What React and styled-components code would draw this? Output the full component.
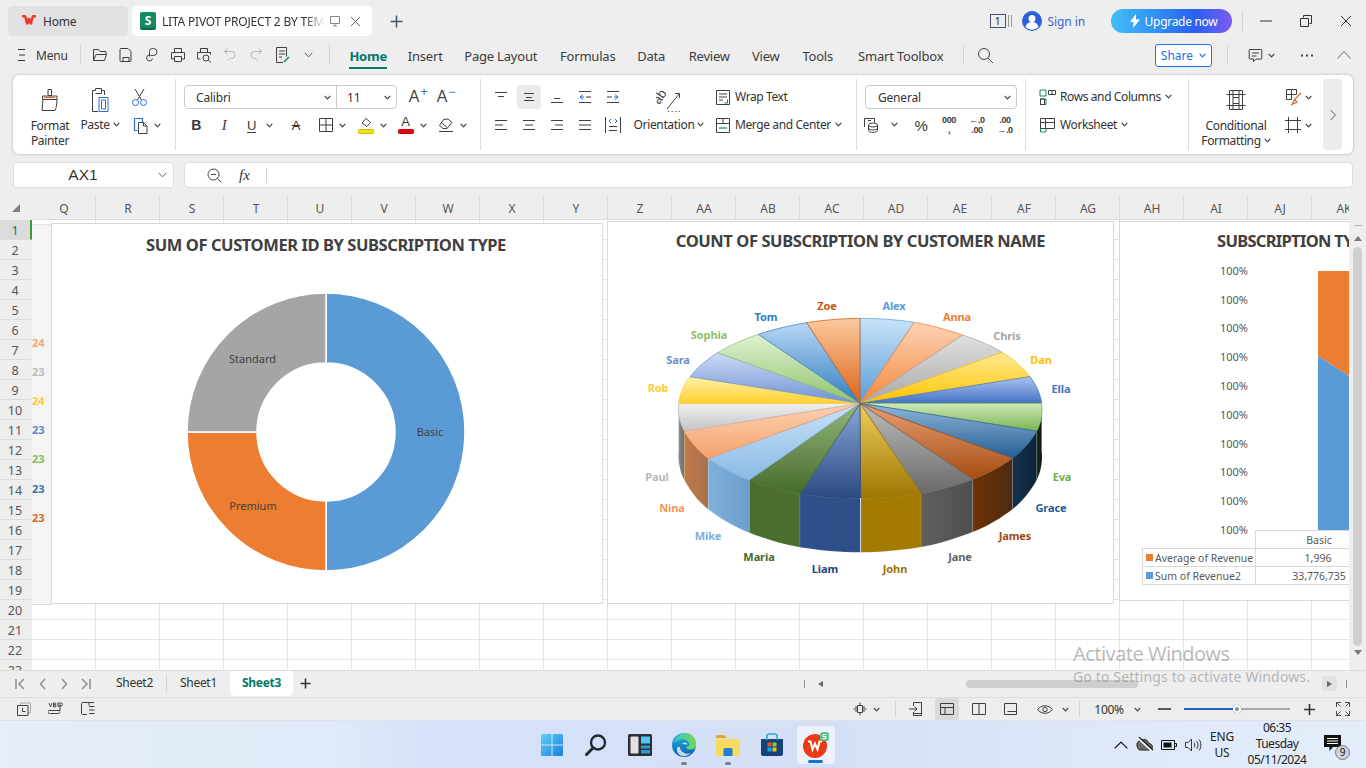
import React from "react";
import styled, { createGlobalStyle } from "styled-components";

const Global = createGlobalStyle`
  html, body { margin: 0; padding: 0; background: #eeeeee; }
  * { box-sizing: border-box; }
  #root { width: 1366px; height: 768px; overflow: hidden; }
`;

const UI = `"Noto Sans", "Open Sans", sans-serif`;

const Page = styled.div`
  position: relative; width: 1366px; height: 768px; overflow: hidden;
  display: flex; flex-direction: column; background: #eeeeee;
  font-family: ${UI}; font-size: 12px; color: #3a3a3a;
`;
const Glyph = styled.svg`
  display: block; flex: none; fill: none; stroke: #3f3f3f; stroke-width: 1;
`;
const Ico = ({ w = 16, h = 16, children }) => (
  <Glyph width={w} height={h} viewBox={`0 0 ${w} ${h}`}>{children}</Glyph>
);
const Caret = ({ c = "#444" }) => (
  <Glyph width="7" height="5" viewBox="0 0 7 5" style={{ stroke: c, strokeWidth: 1.2 }}><path d="M.7 .8l2.8 3 2.8-3" /></Glyph>
);

/* ---------- title bar ---------- */
const TitleBar = styled.div`height: 40px; padding: 6px 0 4px 8px; display: flex; align-items: center;`;
const TabChip = styled.div`
  height: 30px; width: ${p => p.$w}px; margin-right: 4px; border-radius: 5px;
  display: flex; align-items: center; background: ${p => (p.$active ? "#fff" : "#e1e1e1")};
  padding-left: ${p => p.$pad}px; color: #333; font-size: 12px; white-space: nowrap;
`;
const TabName = styled.span`
  width: ${p => p.$w}px; margin: 0 ${p => p.$mr || 0}px 0 ${p => p.$ml}px; overflow: hidden; letter-spacing: -.2px; flex: none;
  ${p => p.$fade && "-webkit-mask-image: linear-gradient(90deg,#000 88%,transparent); mask-image: linear-gradient(90deg,#000 88%,transparent);"}
`;
const SheetBadge = styled.span`
  width: 16px; height: 18px; border-radius: 2px; background: #138a63; color: #fff; flex: none;
  font-weight: 700; font-size: 12px; line-height: 17px; text-align: center; border-bottom: 2px solid #0c6b4c;
`;
const Spring = styled.div`flex: 1;`;
const TitleRight = styled.div`display: flex; align-items: center; height: 30px; margin-left: 1px;`;
const PageBox = styled.span`
  width: 16px; height: 14px; border: 1px solid #4b5568; color: #333; font-size: 11px; line-height: 12px; text-align: center; flex: none;
`;
const SignIn = styled.span`color: #3566d6; font-size: 12px; margin: 0 26px 0 6px; letter-spacing: -.1px;`;
const Upgrade = styled.div`
  width: 121px; height: 24px; border-radius: 12px; display: flex; align-items: center; justify-content: center; gap: 5px; padding-left: 4px;
  background: linear-gradient(90deg,#43bdf7 0%,#2f8cf5 40%,#2a5ff0 70%,#7b5cf2 100%); color: #fff; font-size: 12px; letter-spacing: -.3px;
`;
const VRule = styled.div`width: 1px; height: ${p => p.$h || 20}px; background: #d2d2d2; flex: none; margin: ${p => p.$m || "0"};`;
const WinBtn = styled.div`width: 40px; display: flex; justify-content: center; flex: none;`;

/* ---------- menu row ---------- */
const MenuRow = styled.div`height: 30px; display: flex; align-items: center; padding-left: 18px;`;
const MenuLabel = styled.span`font-size: 12px; margin: 0 12px 0 10px; width: 33px; letter-spacing: -.2px;`;
const QuickSlot = styled.div`width: 26px; display: flex; justify-content: center; flex: none;`;
const TabStrip = styled.div`display: flex; height: 30px; margin-left: 8px;`;
const MenuTab = styled.div`
  width: ${p => p.$w}px; flex: none; display: flex; justify-content: center; align-items: flex-start; padding-top: 6px;
  font-size: 13px; letter-spacing: -.2px; color: #3c3c3c;
`;
const MenuTabText = styled.span`
  height: 23px; line-height: 20px;
  ${p => p.$active && "font-weight: 700; color: #00786c; border-bottom: 2px solid #00786c;"}
`;
const ShareBtn = styled.div`
  width: 57px; height: 23px; border: 1px solid #1a73e8; border-radius: 3px; background: #fff; color: #1a6fe0; flex: none;
  display: flex; align-items: center; justify-content: center; gap: 6px; font-size: 12px; margin: 0 15px 0 161px;
`;
const RightSlot = styled.div`
  width: ${p => p.$w}px; flex: none; display: flex; align-items: center; justify-content: center; gap: 5px; margin-left: ${p => p.$ml || 0}px;
`;

/* ---------- ribbon ---------- */
const Ribbon = styled.div`
  margin: 5px 0 0 13px; width: 1340px; height: 79px; background: #fff; border-radius: 6px;
  box-shadow: 0 0 3px rgba(0,0,0,.28); display: flex; align-items: stretch; padding: 4px 0;
`;
const Group = styled.div`
  width: ${p => p.$w}px; flex: none; padding: 6px 0 0 ${p => p.$pl || 0}px; display: flex; align-items: flex-start;
  border-right: ${p => (p.$last ? "none" : "1px solid #dcdcdc")};
`;
const Big = styled.div`
  width: ${p => p.$w}px; margin-left: ${p => p.$ml || 0}px; flex: none; display: flex; flex-direction: column; align-items: center;
  font-size: 12px; line-height: 15px; color: #333; letter-spacing: -.35px;
`;
const BigIcon = styled.div`height: 29px; display: flex; align-items: center; margin-bottom: ${p => p.$mb || 0}px;`;
const LabelLine = styled.div`display: flex; align-items: center; gap: 3px; white-space: nowrap;`;
const Col = styled.div`display: flex; flex-direction: column; gap: 4px; margin-left: ${p => p.$ml || 0}px; flex: none;`;
const Row = styled.div`display: flex; align-items: center; height: 24px;`;
const Tool = styled.div`
  width: ${p => p.$w || 24}px; height: 24px; margin-left: ${p => p.$ml || 0}px; flex: none; display: flex; align-items: center;
  justify-content: ${p => p.$start ? "flex-start" : "center"}; gap: ${p => p.$gap ?? 6}px; border-radius: 3px; color: #333;
  font-size: 12px; letter-spacing: -.4px; white-space: nowrap; background: ${p => (p.$on ? "#ebebeb" : "transparent")};
  ${p => p.$start && "padding-bottom: 1px;"}
`;
const SelectBox = styled.div`
  display: flex; height: 24px; width: ${p => p.$w}px; border: 1px solid #c9c9c9; border-radius: 4px; background: #fff; flex: none;
`;
const SelectPart = styled.div`
  width: ${p => p.$w}px; flex: ${p => (p.$w ? "none" : 1)}; display: flex; align-items: center; justify-content: space-between;
  padding: 0 5px 0 ${p => p.$pl}px; font-size: 12px; color: #333; letter-spacing: -.2px;
  ${p => p.$split && "border-right: 1px solid #c9c9c9;"}
`;
const LetterA = styled.span`
  font-size: 16px; font-family: "Liberation Sans", sans-serif; font-weight: 300; color: #444; line-height: 1; position: relative; padding-right: 6px;
`;
const Sup = styled.span`
  position: absolute; top: -3px; right: -2px; font-size: 12px; color: ${p => p.$c}; line-height: 1;
`;
const Bold = styled.span`font: 700 14px "Liberation Sans", sans-serif; color: #3a3a3a;`;
const Ital = styled.span`font: italic 15px "Liberation Serif", serif; color: #3a3a3a;`;
const Under = styled.span`font: 13px "Liberation Sans", sans-serif; text-decoration: underline; text-underline-offset: 2px; color: #3a3a3a;`;
const Strike = styled.span`font: 13px "Liberation Sans", sans-serif; text-decoration: line-through; color: #3a3a3a;`;
const ColorA = styled.span`
  display: flex; flex-direction: column; align-items: center; width: 16px; font: 13px/12px "Liberation Sans", sans-serif; color: #3a3a3a;
`;
const ColorBar = styled.span`display: block; width: 16px; height: 5px; margin-top: 1px; border-radius: 1.5px; background: ${p => p.$c}; border: 1px solid ${p => p.$b};`;
const TinyStack = styled.span`
  display: flex; flex-direction: column; align-items: center; font: 700 9px/10px "Liberation Sans", sans-serif; color: #3a3a3a;
`;
const Percent = styled.span`font: 15px "Liberation Sans", sans-serif; color: #3a3a3a;`;
const ScrollBtn = styled.div`
  width: 19px; margin-left: 0; border-radius: 3px; background: #ececec; display: flex; align-items: center; justify-content: center; flex: none;
`;

/* ---------- formula bar ---------- */
const FormulaRow = styled.div`display: flex; height: 26px; margin: 8px 0 0 13px; gap: 10px;`;
const NameBox = styled.div`
  width: 161px; background: #fff; border: 1px solid #dedede; border-radius: 4px; display: flex; align-items: center; padding: 0 6px 0 0; flex: none;
`;
const NameText = styled.span`flex: 1; text-align: center; font-size: 15.5px; font-weight: 300; font-family: "Liberation Sans", sans-serif; color: #333; padding-right: 6px;`;
const FormulaBox = styled.div`
  width: 1169px; background: #fff; border: 1px solid #dedede; border-radius: 4px; display: flex; align-items: center; padding-left: 22px; flex: none;
`;
const Fx = styled.span`font: italic 15px "Liberation Serif", serif; color: #333; margin: 0 10px 0 17px; width: 17px;`;

/* ---------- headers ---------- */
const ColHead = styled.div`display: flex; width: 1349px; overflow: hidden; height: 24px; margin-top: 8px;`;
const Corner = styled.div`width: 32px; display: flex; align-items: center; justify-content: center; flex: none;`;
const ColCell = styled.div`
  width: 64px; flex: none; height: 24px; border-right: 1px solid #dcdcdc; border-bottom: 1px solid #dcdcdc; text-align: center;
  font-size: 12px; line-height: 25px; color: #555; padding-left: 1px;
`;
const Sheet = styled.div`display: flex; height: 450px;`;
const RowHead = styled.div`width: 32px; flex: none; overflow: hidden; background: #eeeeee;`;
const RowCell = styled.div`
  height: 20px; text-align: center; font-size: 12.5px; line-height: 21px; color: ${p => (p.$on ? "#00786c" : "#555")};
  border-bottom: 1px solid #dcdcdc; background: ${p => (p.$on ? "#dcdcdc" : "transparent")};
  border-right: 2px solid ${p => (p.$on ? "#3f9a2f" : "transparent")};
`;
const Grid = styled.div`
  position: relative; width: 1317px; flex: none; overflow: hidden; background-color: #fff;
  background-image:
    repeating-linear-gradient(90deg, transparent 0 63px, #e3e3e3 63px 64px),
    repeating-linear-gradient(180deg, transparent 0 19px, #e3e3e3 19px 20px);
`;
const Strip = styled.div`
  position: absolute; left: 0; top: 4px; width: 19px; height: 381px; background: #f4f4f4; border-top: 1px solid #e3e3e3; border-bottom: 1px solid #d9d9d9;
`;
const StripNum = styled.span`
  position: absolute; left: 0; top: ${p => p.$y - 224 - 9}px; font-weight: 700; font-size: 11px; line-height: 16px; color: ${p => p.$c};
`;
const Card = styled.div`
  position: absolute; left: ${p => p.$x}px; top: ${p => p.$y}px; width: ${p => p.$w}px; height: ${p => p.$h}px;
  background: #fff; border: 1px solid #d9d9d9; display: flex; flex-direction: column;
`;
const ChartTitle = styled.div`
  height: ${p => p.$h}px; line-height: ${p => p.$h}px; flex: none; white-space: nowrap; color: #404040; font-weight: 700;
  font-size: 16.5px; letter-spacing: ${p => p.$ls ?? -0.42}px; text-align: ${p => (p.$pl ? "left" : "center")};
  padding: 0 ${p => p.$pr || 0}px 0 ${p => p.$pl || 0}px;
`;
const VScroll = styled.div`
  width: 17px; flex: none; background: #eeeeee; display: flex; flex-direction: column; align-items: center; padding-top: 5px; 
`;
const VDash = styled.div`width: 8px; height: 1px; background: #b5b5b5; margin-bottom: 10px;`;
const VThumb = styled.div`width: 9px; height: 399px; border-radius: 5px; background: #cfcfcf; margin: 6px 0 4px;`;

/* ---------- sheet tabs ---------- */
const TabsBar = styled.div`
  height: 27px; border-top: 1px solid #dcdcdc; display: flex; align-items: flex-start; background: #eeeeee; position: relative;
`;
const NavSlot = styled.div`width: 22px; height: 25px; display: flex; align-items: center; justify-content: center; flex: none;`;
const NavWrap = styled.div`display: flex; padding-left: 9px; width: 103px; flex: none;`;
const SheetTab = styled.div`
  width: ${p => p.$w}px; height: 25px; flex: none; text-align: center; line-height: 24px; font-size: 12px; color: #333; letter-spacing: -.3px;
  ${p => p.$on && "background:#fff; color:#00786c; font-weight:700; border-radius: 0 0 5px 5px;"}
`;
const TabSep = styled.div`width: 1px; height: 17px; margin-top: 4px; background: #cfcfcf; flex: none;`;
const HScrollWrap = styled.div`display: flex; align-items: center; height: 25px; margin-left: 0; flex: none;`;
const HThumb = styled.div`width: 172px; height: 8px; border-radius: 4px; background: #cfcfcf; margin-left: 143px;`;
const HBtn = styled.div`
  width: 15px; height: 15px; margin-left: 184px; border-radius: 3px; background: #e2e2e2; display: flex; align-items: center; justify-content: center;
`;
const Tick = styled.div`width: 1px; height: 8px; background: #8f8f8f; margin-left: ${p => p.$ml || 0}px;`;
const Tri = styled.div`
  width: 0; height: 0; margin-left: ${p => p.$ml || 0}px; border-style: solid;
  border-width: ${p => (p.$up || p.$down ? "0 4px" : "3.5px 0")};
  ${p => p.$left && "border-width: 3.5px 5px 3.5px 0; border-color: transparent #666 transparent transparent;"}
  ${p => p.$right && "border-width: 3.5px 0 3.5px 5px; border-color: transparent transparent transparent #666;"}
  ${p => p.$up && "border-width: 0 4px 5px 4px; border-color: transparent transparent #7a7a7a transparent;"}
  ${p => p.$down && "border-width: 5px 4px 0 4px; border-color: #7a7a7a transparent transparent transparent;"}
`;

/* ---------- status ---------- */
const StatusBar = styled.div`height: 23px; border-top: 1px solid #dcdcdc; display: flex; align-items: center; background: #ededed; padding-left: 8px;`;
const StatSlot = styled.div`
  width: ${p => p.$w || 32}px; height: 22px; flex: none; display: flex; align-items: center; justify-content: center; gap: ${p => p.$gap ?? 5}px;
  border-radius: 3px; font-size: 12px; color: #333; letter-spacing: -.3px; margin-left: ${p => p.$ml || 0}px;
  background: ${p => (p.$on ? "#d9d9d9" : "transparent")};
`;
const Slider = styled.div`position: relative; width: 106px; height: 2px; background: #a8a8a8; flex: none; margin-left: 6px;`;
const SliderFill = styled.div`position: absolute; left: 0; top: 0; height: 2px; width: 50%; background: #1f63c4;`;
const SliderKnob = styled.div`
  position: absolute; left: 49px; top: -3px; width: 8px; height: 8px; border-radius: 50%; background: #8d8d8d; border: 2px solid #fff; box-shadow: 0 0 1px #777;
`;

/* ---------- taskbar ---------- */
const Taskbar = styled.div`
  height: 48px; display: flex; align-items: center; padding-left: 530px;
  border-top: 1px solid #dbe3ef;
  background: linear-gradient(90deg,#e5eef9 0%,#e0eaf8 24%,#d4e1f8 32%,#d5e0f7 62%,#dde7f8 78%,#e4eefa 100%);
`;
const TaskSlot = styled.div`
  position: relative; width: 44px; height: 38px; flex: none; display: flex; align-items: center; justify-content: center;
  ${p => p.$on && "background:#edf1fb; border-radius: 4px; width: 38px; margin: 0 3px;"}
`;
const Dot = styled.div`
  position: absolute; left: 50%; bottom: -1px; transform: translateX(-50%); width: 6px; height: 3px; border-radius: 2px; background: #7c7f86;
`;
const Active = styled.div`
  position: absolute; left: 11px; bottom: 1px; width: 15px; height: 3px; border-radius: 2px; background: #0f72d8;
`;
const Tray = styled.div`display: flex; align-items: center; margin-left: 271px; height: 48px;`;
const TraySlot = styled.div`width: 24px; display: flex; justify-content: center; flex: none;`;
const Lang = styled.div`
  width: 34px; margin-left: 0; text-align: center; font-size: 12px; line-height: 16px; color: #222; flex: none; letter-spacing: -.2px;
`;
const Clock = styled.div`
  width: 76px; margin: -2px 0 0 0; text-align: center; font-size: 12px; line-height: 16px; color: #222; flex: none; letter-spacing: -.5px;
`;
const Notify = styled.div`position: relative; width: 24px; height: 24px; margin-left: 7px; flex: none;`;
const NotifyCount = styled.div`
  position: absolute; right: -4px; bottom: -3px; width: 15px; height: 15px; border-radius: 50%; background: #ccd3de; border: 1px solid #777;
  font-size: 10px; line-height: 13px; text-align: center; color: #111;
`;

/* ---------- activation ---------- */
const Watermark = styled.div`position: absolute; left: 1073px; top: 641px; color: rgba(120,120,120,.5); pointer-events: none;`;
const WmHead = styled.div`font-size: 20px; line-height: 26px; letter-spacing: -.55px; white-space: nowrap;`;
const WmSub = styled.div`font-size: 14px; line-height: 20px; margin-top: 0; letter-spacing: .15px; white-space: nowrap;`;

/* ---------- chart data ---------- */
const ChartSvg = styled.svg`display: block; flex: none; font-family: ${UI};`;

const donut = () => {
  const c = [326, 432], R = 139, r = 69;
  const pt = (a, rad) => [c[0] + rad * Math.sin(a), c[1] - rad * Math.cos(a)];
  const seg = (a, b) => {
    const [p, q, s, t] = [pt(a, R), pt(b, R), pt(b, r), pt(a, r)];
    const large = b - a > Math.PI ? 1 : 0;
    return `M${p[0]} ${p[1]}A${R} ${R} 0 ${large} 1 ${q[0]} ${q[1]}L${s[0]} ${s[1]}A${r} ${r} 0 ${large} 0 ${t[0]} ${t[1]}Z`;
  };
  return [
    [seg(0, Math.PI), "#5b9bd5"],
    [seg(Math.PI, 1.5 * Math.PI), "#ed7d31"],
    [seg(1.5 * Math.PI, 2 * Math.PI), "#a5a5a5"],
  ];
};

const rim = [[660,85],[822,97],[968,135],[1087,187],[1170,260],[1205,340],[1190,423],[1117,505],[998,568],[843,610],[662,625],[480,611],[328,570],[205,505],[133,423],[116,340],[150,260],[233,188],[355,133],[500,98]]
  .map(([x, y]) => [x / 3 + 640, y / 3 + 290]);
const CX = 860, CY = 403.3;
const slices = [
  ["Alex", 894, 306, "#5b9bd5", "#c9e3fa", "#5b9bd5"],
  ["Anna", 957, 317, "#ed7d31", "#fdd2b4", "#f3893d"],
  ["Chris", 1007, 336, "#a5a5a5", "#e0e0e0", "#a9a9a9"],
  ["Dan", 1041, 360, "#ffc000", "#ffea94", "#ffc400"],
  ["Ella", 1061, 389, "#4472c4", "#adc3ee", "#4472c4"],
  ["Eva", 1062, 477, "#70ad47", "#cfe8bb", "#7ab54f"],
  ["Grace", 1051, 508, "#255e91", "#90b7dc", "#255e91"],
  ["James", 1015, 536, "#9e480e", "#ea9f74", "#a54d12"],
  ["Jane", 960, 557, "#636363", "#bdbdbd", "#6a6a6a"],
  ["John", 895, 569, "#997300", "#f0cf5c", "#9c7600"],
  ["Liam", 825, 569, "#264478", "#8aa6da", "#2a4a80"],
  ["Maria", 759, 557, "#43682b", "#95b67b", "#466c2d"],
  ["Mike", 708, 536, "#7cafdd", "#c9e3fa", "#8abae4"],
  ["Nina", 672, 508, "#f1975a", "#fdd2b4", "#f5a26b"],
  ["Paul", 657, 477, "#b7b7b7", "#f0f0f0", "#c4c4c4"],
  ["Rob", 658, 388, "#ffcd33", "#fff1a8", "#ffd02e"],
  ["Sara", 678, 360, "#698ed0", "#cdd9f6", "#6f93d3"],
  ["Sophia", 709, 335, "#8cc168", "#e0f1d3", "#8fc46b"],
  ["Tom", 766, 317, "#327dc2", "#b8d7f4", "#327dc2"],
  ["Zoe", 827, 306, "#c55a11", "#fdca9f", "#dc6316"],
];
const walls = {
  5: ["#0f160a", "#1d2c12"], 6: ["#0d2236", "#133350"], 7: ["#4f2a10", "#6d3208"], 8: ["#4f4f4f", "#5f5f5f"],
  9: ["#a37b00", "#a37b00"], 10: ["#2e4f88", "#2f518b"], 11: ["#4a6e2d", "#4a6e2d"], 12: ["#6d9ecb", "#7eb0de"],
  13: ["#a8714d", "#c07a49"], 14: ["#6a6a6a", "#8e8e8e"],
};
const N = rim.length;
const at = i => rim[(i + N) % N];
const curve = i => {
  const [a, b, c, d] = [at(i - 1), at(i), at(i + 1), at(i + 2)];
  return [(c[0] - a[0]) / 6 + b[0], (c[1] - a[1]) / 6 + b[1], c[0] - (d[0] - b[0]) / 6, c[1] - (d[1] - b[1]) / 6, c[0], c[1]];
};
const slicePath = i => {
  const p = at(i), k = curve(i);
  return `M${CX} ${CY}L${p[0]} ${p[1]}C${k.join(" ")}Z`;
};
const depth = p => 47 + 7 * Math.max(0, (p[1] - CY) / 95);
const wallPath = i => {
  const p = at(i), q = at(i + 1), k = curve(i);
  const dp = depth(p), dq = depth(q);
  return `M${p[0]} ${p[1]}C${k.join(" ")}L${q[0]} ${q[1] + dq}C${k[2]} ${k[3] + dq} ${k[0]} ${k[1] + dp} ${p[0]} ${p[1] + dp}Z`;
};
const wallOrder = [5, 14, 6, 13, 7, 12, 8, 11, 9, 10];

const PieChart = () => (
  <ChartSvg width="505" height="343" viewBox="608 260 505 343">
    <defs>
      {slices.map((s, i) => (
        <linearGradient key={s[0]} id={`sl${i}`} x1="0" y1="0" x2="0" y2="1">
          <stop offset="0" stopColor={s[4]} />
          <stop offset="1" stopColor={s[5]} />
        </linearGradient>
      ))}
      {wallOrder.map(i => (
        <linearGradient key={i} id={`wl${i}`} x1="0" y1="0" x2="1" y2="0">
          <stop offset="0" stopColor={walls[i][1]} />
          <stop offset="1" stopColor={walls[i][0]} />
        </linearGradient>
      ))}
    </defs>
    {wallOrder.map(i => <path key={i} d={wallPath(i)} fill={`url(#wl${i})`} stroke="rgba(255,255,255,.18)" strokeWidth=".6" />)}
    {slices.map((s, i) => <path key={s[0]} d={slicePath(i)} fill={`url(#sl${i})`} stroke={s[3]} strokeWidth=".7" />)}
    <line x1="860.5" y1="498" x2="860.5" y2="552" stroke="#c9d3df" strokeWidth="1" />
    {slices.map(s => (
      <text key={s[0]} x={s[1]} y={s[2] + 4} textAnchor="middle" fontSize="11" fontWeight="700" fill={s[3]} letterSpacing="-.1">{s[0]}</text>
    ))}
  </ChartSvg>
);

const DonutChart = () => (
  <ChartSvg width="550" height="337" viewBox="52 266 550 337">
    {donut().map(([d, f]) => <path key={f} d={d} fill={f} stroke="#fff" strokeWidth="1.5" />)}
    <text x="252.5" y="363" textAnchor="middle" fontSize="11" fill="#404040">Standard</text>
    <text x="430" y="436" textAnchor="middle" fontSize="11" fill="#404040">Basic</text>
    <text x="253" y="510" textAnchor="middle" fontSize="11" fill="#404040">Premium</text>
  </ChartSvg>
);

const axisY = [271, 300, 328, 357, 386, 415, 444, 472, 501, 530];
const RevenueChart = () => (
  <ChartSvg width="505" height="342" viewBox="1120 260 505 342">
    {axisY.map((y, i) => <text key={i} x="1248" y={y + 4} textAnchor="end" fontSize="11" fill="#595959">100%</text>)}
    <polygon points="1318,271 1400,271 1400,409 1318,356" fill="#ed7d31" />
    <polygon points="1318,356 1400,409 1400,530 1318,530" fill="#5b9bd5" />
    <path d="M1255.5 530.5H1400M1142.5 548.5H1400M1142.5 566.5H1400M1142.5 584.5H1400M1255.5 530V585M1142.5 548V585" stroke="#d9d9d9" strokeWidth="1" />
    <text x="1319" y="544" textAnchor="middle" fontSize="10.5" fill="#595959">Basic</text>
    <rect x="1146" y="554" width="7" height="7" fill="#ed7d31" />
    <text x="1155" y="562" fontSize="10.5" fill="#595959">Average of Revenue</text>
    <text x="1318" y="562" textAnchor="middle" fontSize="10.5" fill="#595959">1,996</text>
    <rect x="1146" y="572" width="7" height="7" fill="#5b9bd5" />
    <text x="1155" y="580" fontSize="10.5" fill="#595959">Sum of Revenue2</text>
    <text x="1319" y="580" textAnchor="middle" fontSize="10.5" fill="#595959">33,776,735</text>
  </ChartSvg>
);

const columns = ["Q","R","S","T","U","V","W","X","Y","Z","AA","AB","AC","AD","AE","AF","AG","AH","AI","AJ","AK"];
const rowsN = Array.from({ length: 23 }, (_, i) => i + 1);
const stripNums = [["24", 343, "#f4a66e"], ["23", 372, "#bdbdbd"], ["24", 401, "#ffc933"], ["23", 430, "#5f86cc"], ["23", 459, "#86bd62"], ["23", 489, "#3a74a8"], ["23", 518, "#d0702c"]];

/* ---------- small icons ---------- */
const blue = { stroke: "#2c6bd0" };
const green = { stroke: "#0f8a5f" };
const grey = { stroke: "#b4b4b4" };

const AlignI = ({ d }) => <Ico><path d={d} /></Ico>;

export default function App() {
  return (
    <Page>
      <Global />
      <TitleBar>
        <TabChip $w={120} $pad={13}>
          <Glyph width="16" height="13" viewBox="0 0 16 13" style={{ stroke: "#e8392a", strokeWidth: 2.4 }}><path d="M1 1.2h3.2l2 8 1.8-6 1.8 6 2-8H15" strokeLinejoin="bevel" /></Glyph>
          <TabName $ml={6} $w={50}>Home</TabName>
        </TabChip>
        <TabChip $w={240} $active $pad={8}>
          <SheetBadge>S</SheetBadge>
          <TabName $ml={6} $mr={4} $w={163} $fade>LITA PIVOT PROJECT 2 BY TEMI</TabName>
          <Ico w={12} h={12}><path d="M1.5 1.5h9v7h-9zM4 11h4M6 8.500v2.500" stroke="#888" /></Ico>
          <span style={{ width: 9 }} />
          <Ico w={11} h={11}><path d="M1 1l9 9M10 1l-9 9" stroke="#666" /></Ico>
        </TabChip>
        <span style={{ width: 14 }} />
        <Ico w={13} h={13}><path d="M6.500 .5v12M.5 6.500h12" stroke="#46556b" strokeWidth="1.500" /></Ico>
        <Spring />
        <TitleRight>
          <PageBox>1</PageBox>
          <span style={{ width: 2 }} />
          <Ico w={5} h={14}><path d="M.5 1v12M3.500 1v12" stroke="#9a9a9a" /></Ico>
          <span style={{ width: 9 }} />
          <Glyph width="20" height="20" viewBox="0 0 20 20" style={{ stroke: "none" }}>
            <circle cx="10" cy="10" r="10" fill="#2c62d9" />
            <circle cx="10" cy="7.500" r="3.500" fill="#fff" />
            <path d="M3.500 16c1-4 4-5 6.500-5s5.500 1 6.500 5a9 9 0 0 1-13 0z" fill="#fff" />
          </Glyph>
          <SignIn>Sign in</SignIn>
          <Upgrade>
            <Glyph width="10" height="14" viewBox="0 0 10 14" style={{ stroke: "none" }}><path d="M6 0L0 8h3.500L3 14l7-8.500H6z" fill="#fff" /></Glyph>
            Upgrade now
          </Upgrade>
          <VRule $h={20} $m="0 3px 0 10px" />
          <WinBtn><Ico w={12} h={2}><path d="M0 1h12" stroke="#333" /></Ico></WinBtn>
          <WinBtn><Ico w={12} h={12}><path d="M3.500 2.500V.5h8v8h-2M.5 3.500h8v8h-8z" stroke="#333" /></Ico></WinBtn>
          <WinBtn><Ico w={12} h={12}><path d="M1 1l10 10M11 1L1 11" stroke="#333" /></Ico></WinBtn>
        </TitleRight>
      </TitleBar>

      <MenuRow>
        <Ico w={8} h={12}><path d="M0 .5h7M1 6h6M0 11.500h7" stroke="#333" /></Ico>
        <MenuLabel>Menu</MenuLabel>
        <VRule $h={20} $m="0 6px 0 0" />
        <QuickSlot><Ico><path d="M1.500 13.500v-11h5l1.500 2h6v3M1.500 13.500h11l2-6H4l-2.500 6" /></Ico></QuickSlot>
        <QuickSlot><Ico><path d="M3 1.500h7l3 3v9a1 1 0 0 1-1 1H3a1 1 0 0 1-1-1v-11a1 1 0 0 1 1-1zM5 14.500v-4h6v4" /></Ico></QuickSlot>
        <QuickSlot><Ico><path d="M5.500 9.500V4.500a3 3 0 0 1 3-3h1a3 3 0 0 1 0 7H6.500M5.500 8a3 3 0 1 0 3 3.500" /></Ico></QuickSlot>
        <QuickSlot><Ico><path d="M4.500 5V1.500h7V5M4.500 12H1.500V5.500h13V12h-3M4.500 9.500h7v5h-7z" /></Ico></QuickSlot>
        <QuickSlot><Ico><path d="M4.500 5V1.500h7V5M4.500 12H1.500V5.500h13v2" /><circle cx="10" cy="11" r="3" /><path d="M12.200 13.200l2.800 2.300" /></Ico></QuickSlot>
        <span style={{ width: 1 }} />
        <QuickSlot><Ico><path d="M5.500 1.500L2.500 4.500l3 3M2.500 4.500h7a3.500 3.500 0 0 1 0 7H8l-2 2" style={grey} /></Ico></QuickSlot>
        <QuickSlot><Ico><path d="M10.500 1.500l3 3-3 3M13.500 4.500h-7a3.500 3.500 0 0 0 0 7H8l2 2" style={grey} /></Ico></QuickSlot>
        <QuickSlot><Ico h={18}><path d="M9 16.500H2.500v-15h10v9M5 5h6M5 8h6M5 11h3" /><path d="M10 16l5-5" style={green} strokeWidth="1.500" /></Ico></QuickSlot>
        <QuickSlot><Ico w={9} h={6}><path d="M.7 .8l3.800 4 3.800-4" stroke="#555" /></Ico></QuickSlot>
        <VRule $h={20} $m="0 0 0 8px" />
        <TabStrip>
          {[["Home", 60, true], ["Insert", 54], ["Page Layout", 97], ["Formulas", 77], ["Data", 50], ["Review", 66], ["View", 47], ["Tools", 57], ["Smart Toolbox", 109]].map(([t, w, a]) => (
            <MenuTab key={t} $w={w}><MenuTabText $active={a}>{t}</MenuTabText></MenuTab>
          ))}
        </TabStrip>
        <VRule $h={20} $m="0 0 0 8px" />
        <span style={{ width: 23 }} />
        <Ico w={17} h={17}><circle cx="7" cy="7" r="5.500" stroke="#444" /><path d="M11 11l5 5" stroke="#444" /></Ico>
        <ShareBtn>Share<Caret c="#1a6fe0" /></ShareBtn>
        <VRule $h={20} />
        <RightSlot $w={56} $ml={6}><Ico w={15} h={15}><path d="M2 1.500h11a.8.8 0 0 1 .8.8v8a.8.8 0 0 1-.8.8H8l-2.500 2.500V11H2a.8.8 0 0 1-.8-.8v-8a.8.8 0 0 1 .8-.8zM4 5h7M4 8h4.500" /></Ico><Caret /></RightSlot>
        <RightSlot $w={30} $ml={2}><Ico w={14} h={3}><path d="M1 1.500h2M6 1.500h2M11 1.500h2" stroke="#444" strokeWidth="2" /></Ico></RightSlot>
        <RightSlot $w={44}><Ico w={14} h={8}><path d="M.5 7.500l6.500-7 6.500 7" stroke="#666" /></Ico></RightSlot>
      </MenuRow>

      <Ribbon>
        <Group $w={163}>
          <Big $w={50} $ml={12}>
            <BigIcon $mb={4}><Ico w={24} h={24}><path d="M10 1.500h3.500v6H10zM4.500 8h14.500v3.500H4.500zM5 11.500l-1 11h13c1-2 2-6 2-11" /><path d="M6 9.500h11" stroke="#d8662d" strokeWidth="1.200" /></Ico></BigIcon>
            <div>Format</div><div>Painter</div>
          </Big>
          <Big $w={48} $ml={1}>
            <BigIcon $mb={3}><Ico w={22} h={26}><path d="M3.500 3.500h3V1.500h6v2h3V8M9 24.500H3.500v-21M6.500 6.500h6V3.500" /><path d="M10 10.500h9v14h-9zM12.500 13v9h4v-9z" style={blue} /></Ico></BigIcon>
            <LabelLine>Paste <Caret /></LabelLine>
          </Big>
          <Col $ml={0}>
            <Tool $w={30} $ml={0}><Ico w={17} h={19}><path d="M4 1l6.500 11M13 1L6.500 12" /><circle cx="4.500" cy="14.500" r="3" style={blue} /><circle cx="12.500" cy="14.500" r="3" style={blue} /></Ico></Tool>
            <Tool $w={42} $ml={2}>
              <Ico w={15} h={17}><path d="M1.500 1.500h8v4M1.500 1.500v12h3" style={blue} strokeWidth="1.200" /><path d="M5.500 5.500h5l3.500 3.500v7.500H5.500zM10.500 5.500v3.500h3.500" /></Ico>
              <Caret />
            </Tool>
          </Col>
        </Group>

        <Group $w={305} $pl={8}>
          <Col>
            <Row>
              <SelectBox $w={213}>
                <SelectPart $w={152} $pl={11} $split>Calibri<Caret /></SelectPart>
                <SelectPart $pl={10}>11<Caret /></SelectPart>
              </SelectBox>
              <Tool $w={28} $ml={6}><LetterA>A<Sup $c="#2c6bd0">+</Sup></LetterA></Tool>
              <Tool $w={28}><LetterA>A<Sup $c="#2c6bd0">−</Sup></LetterA></Tool>
            </Row>
            <Row>
              <Tool $w={24}><Bold>B</Bold></Tool>
              <Tool $w={24} $ml={4}><Ital>I</Ital></Tool>
              <Tool $w={36} $ml={6} $gap={10}><Under>U</Under><Caret /></Tool>
              <Tool $w={24} $ml={6}><Strike>A</Strike></Tool>
              <Tool $w={36} $ml={6}><Ico w={14} h={14}><path d="M.5 .5h13v13H.5zM7 .5v13M.5 7h13" /></Ico><Caret /></Tool>
              <Tool $w={36} $ml={4}>
                <ColorA><Ico w={14} h={11}><path d="M3 6l4-4.500 4.500 4-3.500 4z" /><path d="M6 1V.5" /></Ico><ColorBar $c="#f7e400" $b="#c9b700" /></ColorA>
                <Caret />
              </Tool>
              <Tool $w={36} $ml={4}><ColorA>A<ColorBar $c="#e60012" $b="#c6000f" /></ColorA><Caret /></Tool>
              <Tool $w={36} $ml={4}><Ico w={16} h={16}><path d="M5.500 2.500L1.500 8.500l3.500 3h4l5-6-4-3.500zM3.500 5.500l5.500 5M1 14.500h14" /></Ico><Caret /></Tool>
            </Row>
          </Col>
        </Group>

        <Group $w={376} $pl={8}>
          <Col>
            <Row>
              <Tool><AlignI d="M2 3.500h12M5 7.500h6" /></Tool>
              <Tool $ml={4} $on><AlignI d="M3 4.500h10M5 8.500h6M3 11.500h10" /></Tool>
              <Tool $ml={4}><AlignI d="M5 9.500h6M2 13.500h12" /></Tool>
              <Tool $ml={4}><Ico><path d="M2 2.500h12M2 13.500h12M9 8h5" /><path d="M6 5.500L3 8l3 2.500M3 8h4" style={blue} /></Ico></Tool>
              <Tool $ml={4}><Ico><path d="M2 2.500h12M2 13.500h12M2 8h5" /><path d="M10 5.500l3 2.500-3 2.500M13 8H9" style={blue} /></Ico></Tool>
            </Row>
            <Row>
              <Tool><AlignI d="M2 3.500h12M2 8h8M2 12.500h12" /></Tool>
              <Tool $ml={4}><AlignI d="M2 3.500h12M4 8h8M2 12.500h12" /></Tool>
              <Tool $ml={4}><AlignI d="M2 3.500h12M6 8h8M2 12.500h12" /></Tool>
              <Tool $ml={4}><AlignI d="M2 3.500h12M2 8h12M2 12.500h12" /></Tool>
              <Tool $ml={4}><Ico h={18}><path d="M.5 1v16M15.500 1v16M4 10.500h8M4 14.500h8" /><path d="M6 3L4 5l2 2M10 3l2 2-2 2" style={blue} /></Ico></Tool>
            </Row>
          </Col>
          <Big $w={72} $ml={8}>
            <BigIcon $mb={3}>
              <Glyph width="26" height="26" viewBox="0 0 26 26">
                <text x="0" y="0" transform="translate(3 18) rotate(-55)" fontFamily="Liberation Sans" fontSize="13" fill="#444" stroke="none">ab</text>
                <path d="M11 22L23 7M19 6.500h4.500V11" stroke="#444" />
                <path d="M12 24.500h12" stroke="#777" strokeDasharray="1.500 2" />
              </Glyph>
            </BigIcon>
            <LabelLine>Orientation <Caret /></LabelLine>
          </Big>
          <Col $ml={10}>
            <Tool $w={130} $start $gap={4}><Ico><path d="M1.500 15.500v-14h13v14zM4 5h8M4 8h8M4 11h4" /><path d="M12.500 10.500v3.500h-3" style={green} /></Ico>Wrap Text</Tool>
            <Tool $w={130} $start $gap={4}><Ico><path d="M1.500 1.500h13v14h-13zM1.500 6.500h13M8 1.500v5" /><path d="M4 11h8" style={green} strokeWidth="1.200" /></Ico>Merge and Center<Caret /></Tool>
          </Col>
        </Group>

        <Group $w={169} $pl={8}>
          <Col>
            <Row>
              <SelectBox $w={152}><SelectPart $pl={12}>General<Caret /></SelectPart></SelectBox>
            </Row>
            <Row>
              <Tool $w={38} $ml={-2} $gap={12} $start>
                <Ico w={16} h={16}><path d="M1.500 10V1.500h10v4M5 3.500h3" /><ellipse cx="10" cy="8" rx="4.500" ry="2" /><path d="M5.500 8v5.500c0 2.500 9 2.500 9 0V8M5.500 11c0 2.500 9 2.500 9 0" /></Ico>
                <Caret />
              </Tool>
              <Tool $w={24} $ml={8}><Percent>%</Percent></Tool>
              <Tool $w={24} $ml={4}><TinyStack><span>000</span><span>,</span></TinyStack></Tool>
              <Tool $w={24} $ml={4}><TinyStack><span>←.0</span><span>.00</span></TinyStack></Tool>
              <Tool $w={24} $ml={4}><TinyStack><span>.00</span><span>→.0</span></TinyStack></Tool>
            </Row>
          </Col>
        </Group>

        <Group $w={163} $pl={13}>
          <Col>
            <Tool $w={145} $start $gap={4}><Ico w={17} h={16}><path d="M1 1h6v6H1zM1 10h6v5.500H1" style={green} /><path d="M9.500 1.500h7v4h-7zM13 1.500v4M1.500 10v5.500h4V10z" /></Ico>Rows and Columns<Caret /></Tool>
            <Tool $w={145} $start $gap={4}><Ico w={17} h={16}><path d="M1.500 1.500h14v10M1.500 1.500v10h14M1.500 5.500h14M6.500 1.500v10" /><path d="M1.500 11.500v3.500h5l1-3.500" style={green} /></Ico>Worksheet<Caret /></Tool>
          </Col>
        </Group>

        <Group $w={134} $last>
          <Big $w={84} $ml={5}>
            <BigIcon $mb={4}><Ico w={20} h={22}><path d="M3.500 1.500h13v19h-13zM.5 5.500h19M.5 16.500h19M7 8.500h6v6H7zM7 1.500v7M13 14.500v6M13 1.500v7M7 14.500v6" /></Ico></BigIcon>
            <div>Conditional</div>
            <LabelLine>Formatting<Caret /></LabelLine>
          </Big>
          <Col $ml={1}>
            <Tool $w={38} $gap={2}><Ico w={18} h={18}><path d="M1.500 1.500h10v5h-5v5h-5zM6.500 1.500v10M1.500 6.500h5" /><path d="M16 5L9 12M9.500 11.500L7 16.500l5-2.500z" stroke="#d8662d" strokeWidth="1.200" /></Ico><Caret /></Tool>
            <Tool $w={38} $gap={4}><Ico w={16} h={16}><path d="M3.500 0v16M12.500 0v16M0 3.500h16M0 12.500h16" /></Ico><Caret /></Tool>
          </Col>
        </Group>

        <ScrollBtn><Ico w={8} h={12}><path d="M1.500 1l5 5-5 5" stroke="#555" /></Ico></ScrollBtn>
      </Ribbon>

      <FormulaRow>
        <NameBox><NameText>AX1</NameText><Ico w={9} h={6}><path d="M.7 .8l3.800 4 3.800-4" stroke="#666" /></Ico></NameBox>
        <FormulaBox>
          <Ico w={15} h={15}><circle cx="6.500" cy="6.500" r="5.500" /><path d="M4 6.500h5M10.500 10.500l4 4" /></Ico>
          <Fx>fx</Fx>
          <VRule $h={15} />
        </FormulaBox>
      </FormulaRow>

      <ColHead>
        <Corner><Glyph width="8" height="8" viewBox="0 0 8 8" style={{ stroke: "none" }}><path d="M8 0v8H0z" fill="#7f7f7f" /></Glyph></Corner>
        {columns.map(c => <ColCell key={c}>{c}</ColCell>)}
      </ColHead>

      <Sheet>
        <RowHead>
          {rowsN.map(n => <RowCell key={n} $on={n === 1}>{n}</RowCell>)}
        </RowHead>
        <Grid>
          <Strip>
            {stripNums.map(([t, y, c]) => <StripNum key={y} $y={y} $c={c}>{t}</StripNum>)}
          </Strip>
          <Card $x={19} $y={3} $w={552} $h={381}>
            <ChartTitle $h={42} $pr={2}>SUM OF CUSTOMER ID BY SUBSCRIPTION TYPE</ChartTitle>
            <DonutChart />
          </Card>
          <Card $x={575} $y={1} $w={507} $h={383}>
            <ChartTitle $h={38}>COUNT OF SUBSCRIPTION BY CUSTOMER NAME</ChartTitle>
            <PieChart />
          </Card>
          <Card $x={1087} $y={1} $w={507} $h={380}>
            <ChartTitle $h={38} $pl={97} $ls={-0.7}>SUBSCRIPTION TYPE BY REVENUE</ChartTitle>
            <RevenueChart />
          </Card>
        </Grid>
        <VScroll>
          <VDash />
          <Tri $up />
          <VThumb />
          <Tri $down />
        </VScroll>
      </Sheet>

      <TabsBar>
        <NavWrap>
          <NavSlot><Ico w={10} h={12}><path d="M1 1v10M9 1L4 6l5 5" stroke="#8f8f8f" strokeWidth="1.500" /></Ico></NavSlot>
          <NavSlot><Ico w={7} h={12}><path d="M6 1L1.500 6 6 11" stroke="#8f8f8f" strokeWidth="1.500" /></Ico></NavSlot>
          <NavSlot><Ico w={7} h={12}><path d="M1 1l4.500 5L1 11" stroke="#8f8f8f" strokeWidth="1.500" /></Ico></NavSlot>
          <NavSlot><Ico w={10} h={12}><path d="M9 1v10M1 1l5 5-5 5" stroke="#8f8f8f" strokeWidth="1.500" /></Ico></NavSlot>
        </NavWrap>
        <SheetTab $w={63}>Sheet2</SheetTab>
        <TabSep />
        <SheetTab $w={63}>Sheet1</SheetTab>
        <SheetTab $w={63} $on>Sheet3</SheetTab>
        <NavSlot style={{ marginLeft: 1 }}><Ico w={11} h={11}><path d="M5.500 .5v10M.5 5.500h10" stroke="#333" strokeWidth="1.600" /></Ico></NavSlot>
        <HScrollWrap>
          <Tick $ml={488} />
          <Tri $left $ml={13} />
          <HThumb />
          <HBtn><Tri $right /></HBtn>
          <Tick $ml={9} />
        </HScrollWrap>
      </TabsBar>

      <StatusBar>
        <StatSlot><Ico w={14} h={14}><path d="M3.500 3V1h10v10h-2" stroke="#aaa" /><path d="M.5 3.500h10.500v10H.500zM5.500 6v3.500h3" /></Ico></StatSlot>
        <StatSlot><Ico w={16} h={14}><path d="M5 8.500H12V1.500M1.500 11.500h9c1 0 1.500-1 1.500-2M1 11.500a1.500 1.500 0 0 1 1-3h3" /><path d="M1 1l1.500 4L4 1M5.500 1v4h1.500a1 1 0 0 0 0-2h-1.500 1.500a1 1 0 0 0 0-2zM10 5V1h3a1 1 0 0 1 0 3h-3" strokeWidth=".9" /></Ico></StatSlot>
        <StatSlot><Ico w={14} h={14}><path d="M13 .5H1.500a1 1 0 0 0-1 1v10a1 1 0 0 0 1 1H6M8 3.500v-3M8 4.500h5.500M8 8h5.500M8 11.500h5.500" /></Ico></StatSlot>
        <StatSlot $w={36} $ml={744} $gap={6}><Ico w={14} h={14}><path d="M4.500 3.500h5v7h-5zM7 .5v3M7 10.500v3M.5 7h4M9.500 7h4M2 5h2M2 9h2M10 5h2M10 9h2" /></Ico><Caret /></StatSlot>
        <VRule $h={16} $m="0 0 0 11px" />
        <StatSlot $w={39}><Ico w={16} h={16}><path d="M5.500 5V1.500h8v13h-8V11M1 8h8M6.500 5.500L9 8l-2.500 2.500M6 12.500h7" /></Ico></StatSlot>
        <StatSlot $w={24} $on><Ico w={16} h={14}><path d="M1.500 1.500h13v11h-13zM1.500 5.500h13M6 5.500v7" /></Ico></StatSlot>
        <StatSlot $ml={4}><Ico w={16} h={14}><path d="M1.500 1.500h13v11h-13zM8 1.500v11" /></Ico></StatSlot>
        <StatSlot><Ico w={16} h={14}><path d="M13.500 1.500v8h-9M1.500 1.500h12M1.500 12.500h12V9.500M1.500 1.500v11" /></Ico></StatSlot>
        <StatSlot $w={36} $ml={8} $gap={9}><Ico w={16} h={11}><path d="M.7 5.500C4 .5 12 .5 15.300 5.500 12 10.500 4 10.500 .7 5.500z" /><circle cx="8" cy="5.500" r="2.200" /></Ico><Caret /></StatSlot>
        <VRule $h={16} $m="0 0 0 8px" />
        <StatSlot $w={50} $ml={4}>100%</StatSlot>
        <Caret />
        <span style={{ width: 17 }} />
        <Ico w={13} h={2}><path d="M0 1h13" stroke="#333" strokeWidth="1.600" /></Ico>
        <span style={{ width: 7 }} />
        <Slider><SliderFill /><SliderKnob /></Slider>
        <span style={{ width: 14 }} />
        <Ico w={11} h={11}><path d="M5.500 0v11M0 5.500h11" stroke="#333" strokeWidth="1.600" /></Ico>
        <span style={{ width: 21 }} />
        <Ico w={14} h={14}><path d="M5 .5H.5V5M9 .5h4.500V5M.5 9v4.500H5M13.500 9v4.500H9M.5 .5l4 4M13.500 .5l-4 4M.5 13.500l4-4M13.500 13.500l-4-4" strokeWidth=".9" /></Ico>
      </StatusBar>

      <Taskbar>
        <TaskSlot>
          <Glyph width="24" height="24" viewBox="0 0 24 24" style={{ stroke: "none" }}>
            <defs><linearGradient id="win" x1="0" y1="0" x2="1" y2="1"><stop offset="0" stopColor="#5fd0f5" /><stop offset="1" stopColor="#1a7fdc" /></linearGradient></defs>
            <path d="M1 2.500A1.500 1.500 0 0 1 2.500 1h9v10.500H1zM12.500 1h9A1.500 1.500 0 0 1 23 2.500v9H12.500zM1 12.500h10.500V23h-9A1.500 1.500 0 0 1 1 21.500zM12.500 12.500H23v9a1.500 1.500 0 0 1-1.500 1.500h-9z" fill="url(#win)" />
          </Glyph>
        </TaskSlot>
        <TaskSlot>
          <Glyph width="24" height="24" viewBox="0 0 24 24" style={{ stroke: "#24292f", strokeWidth: 2.4 }}><circle cx="14" cy="9.500" r="7" /><path d="M9 15l-6.500 6.500" strokeLinecap="round" strokeWidth="3" /></Glyph>
        </TaskSlot>
        <TaskSlot>
          <Glyph width="24" height="22" viewBox="0 0 24 22" style={{ stroke: "none" }}>
            <rect width="24" height="22" rx="1.500" fill="#2c3036" />
            <rect x="2.500" y="2.500" width="8" height="17" rx="1" fill="#e2e2e2" />
            <rect x="13" y="2.500" width="9" height="7" fill="#4dc8f5" />
            <rect x="13" y="11.500" width="9" height="3" fill="#2a9ad8" />
            <rect x="13" y="16" width="9" height="3.500" fill="#2a9ad8" />
          </Glyph>
        </TaskSlot>
        <TaskSlot>
          <Glyph width="24" height="24" viewBox="0 0 24 24" style={{ stroke: "none" }}>
            <defs>
              <linearGradient id="edge1" x1="0" y1="0" x2="0" y2="1"><stop offset="0" stopColor="#2ab8d8" /><stop offset="1" stopColor="#0c5cb8" /></linearGradient>
              <linearGradient id="edge2" x1="0" y1="0" x2="1" y2="0"><stop offset="0" stopColor="#38c6d0" /><stop offset="1" stopColor="#79d850" /></linearGradient>
            </defs>
            <circle cx="12" cy="12" r="12" fill="url(#edge1)" />
            <path d="M2 10C4 3 10 0 14 0c6 0 10 5 10 12 0 3-3 4.500-6 4.500-2.500 0-4-1-4-2.500 2 0 3.500-1.500 3-3.500C16.500 6 8 4 2 10z" fill="url(#edge2)" />
            <path d="M8 14c0 5 6 8 11 6-2 2.500-6 3.500-9 3-4-1-6-5-4.500-9z M10 11c2-2 5-1.500 5.500 .5" fill="#fff" opacity=".75" />
          </Glyph>
          <Dot />
        </TaskSlot>
        <TaskSlot>
          <Glyph width="24" height="24" viewBox="0 0 24 24" style={{ stroke: "none" }}>
            <path d="M0 3.500A1.500 1.500 0 0 1 1.500 2H8l3 3h-11z" fill="#e0a820" />
            <path d="M0 6h22.500A1.500 1.500 0 0 1 24 7.500v14a1.500 1.500 0 0 1-1.500 1.500h-21A1.500 1.500 0 0 1 0 21.500z" fill="#fbd95e" />
            <path d="M7.500 16.500a1.500 1.500 0 0 1 1.500-1.500h6a1.500 1.500 0 0 1 1.500 1.500V23h-9z" fill="#1f7fd0" />
          </Glyph>
          <Dot />
        </TaskSlot>
        <TaskSlot>
          <Glyph width="24" height="24" viewBox="0 0 24 24" style={{ stroke: "none" }}>
            <path d="M1 6h22v15a2 2 0 0 1-2 2H3a2 2 0 0 1-2-2z" fill="#14437a" />
            <path d="M7 7V3a2 2 0 0 1 2-2h6a2 2 0 0 1 2 2v4" fill="none" stroke="#29a8d8" strokeWidth="1.600" />
            <rect x="7.500" y="9.500" width="4" height="4" fill="#f1511b" />
            <rect x="12.500" y="9.500" width="4" height="4" fill="#80cc28" />
            <rect x="7.500" y="14.500" width="4" height="4" fill="#00adef" />
            <rect x="12.500" y="14.500" width="4" height="4" fill="#fbbc09" />
          </Glyph>
        </TaskSlot>
        <TaskSlot $on>
          <Glyph width="26" height="26" viewBox="0 0 26 26" style={{ stroke: "none" }}>
            <circle cx="12" cy="14" r="12" fill="#ea3b16" />
            <path d="M5 9.500h2.500l2 8 2.500-6 2.500 6 2-8H19" fill="none" stroke="#fff" strokeWidth="2" />
            <rect x="17" y="0" width="9" height="9" rx="2.500" fill="#5cc28a" />
            <path d="M23.500 2.500h-3.500v2h3v2h-3.500" fill="none" stroke="#fff" strokeWidth="1" />
          </Glyph>
          <Active />
        </TaskSlot>
        <Tray>
          <TraySlot><Ico w={14} h={8}><path d="M.7 7.300L7 1l6.300 6.300" stroke="#111" strokeWidth="1.200" /></Ico></TraySlot>
          <TraySlot><Ico w={18} h={15}><path d="M4 13h9.500c4-.5 4-6-.5-6.500C12 3 8 1 5.500 3.500 2 3.500 .5 6 1 8.500 1.300 11 2.500 13 4 13z" fill="#6b6b6b" stroke="#222" /><path d="M2 1l14 13" stroke="#eef3fb" strokeWidth="2.200" /><path d="M3 0l14 13" stroke="#111" strokeWidth="1.100" /></Ico></TraySlot>
          <TraySlot><Ico w={16} h={10}><path d="M.5 .5h13v9H.5zM14 3.500h1.500v3H14" stroke="#111" /><path d="M2.500 2.500h8v5h-8z" fill="#111" stroke="none" /></Ico></TraySlot>
          <TraySlot><Ico w={17} h={14}><path d="M.5 4.500h2.500L6.500 1v12L3 9.500H.5zM9 4.500c1 1.500 1 3.500 0 5M11.500 3c2 2.500 2 5.500 0 8M14 1.500c2.500 3 2.500 8 0 11" stroke="#222" strokeWidth=".9" /></Ico></TraySlot>
          <Lang>ENG<br />US</Lang>
          <Clock>06:35<br />Tuesday<br />05/11/2024</Clock>
          <Notify>
            <Glyph width="19" height="17" viewBox="0 0 19 17" style={{ stroke: "none", marginTop: 2, marginLeft: 2 }}>
              <path d="M0 0h17v12H9l-3.500 4v-4H0z" fill="#111" />
              <path d="M3 3.500h11M3 6h11M3 8.500h11" stroke="#fff" strokeWidth="1" />
            </Glyph>
            <NotifyCount>9</NotifyCount>
          </Notify>
        </Tray>
      </Taskbar>

      <Watermark>
        <WmHead>Activate Windows</WmHead>
        <WmSub>Go to Settings to activate Windows.</WmSub>
      </Watermark>
    </Page>
  );
}
